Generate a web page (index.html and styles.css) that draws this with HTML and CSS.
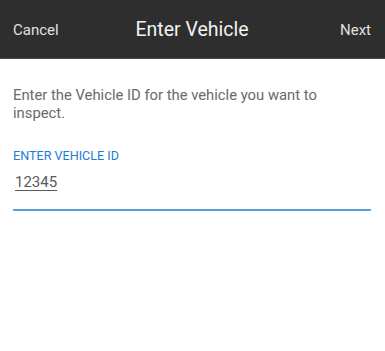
FILE: index.html
```html
<!DOCTYPE html>
<html>
<head>
<meta charset="utf-8">
<link rel="stylesheet" href="styles.css">
</head>
<body>
<header class="bar">
  <span class="bar-btn left">Cancel</span>
  <span class="bar-title">Enter Vehicle</span>
  <span class="bar-btn right">Next</span>
</header>
<main class="content">
  <p class="intro">Enter the Vehicle ID for the vehicle you want to inspect.</p>
  <div class="field">
    <div class="field-label">ENTER VEHICLE ID</div>
    <div class="field-input"><span class="value">12345</span></div>
  </div>
</main>
</body>
</html>
```
FILE: styles.css
```css
html, body {
  margin: 0;
  padding: 0;
  background: #ffffff;
  font-family: Roboto, "Liberation Sans", sans-serif;
}
.bar {
  height: 58px;
  background: #2e2e2e;
  border-bottom: 1px solid #4a4a4a;
  display: grid;
  grid-template-columns: 1fr auto 1fr;
  align-items: center;
  padding: 0 14px 0 13px;
}
.bar-btn {
  font-size: 15px;
  color: #e0e0e0;
  padding-top: 2px;
}
.bar-btn.right {
  justify-self: end;
}
.bar-title {
  font-size: 19.5px;
  color: #f2f2f2;
  padding-top: 1px;
}
.content {
  padding: 0 14px 0 13px;
}
.intro {
  margin: 27px 0 0;
  font-size: 14.8px;
  line-height: 18px;
  color: #6a6a6a;
  max-width: 320px;
}
.field {
  margin-top: 27px;
}
.field-label {
  font-size: 12.6px;
  line-height: 14px;
  color: #1e7bd6;
}
.field-input {
  margin-top: 10px;
  padding: 0 0 18px 2px;
  border-bottom: 2px solid #5a9ede;
  font-size: 15px;
  line-height: 18px;
  color: #5a5a5a;
}
.value {
  text-decoration: underline;
  text-underline-offset: 3px;
}
```
